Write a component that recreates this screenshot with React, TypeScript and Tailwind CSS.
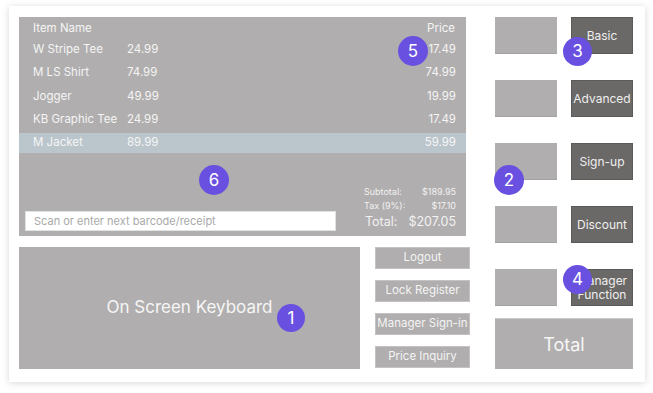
import React from "react";

const items = [
  { name: "W Stripe Tee", price: "24.99", sale: "17.49" },
  { name: "M LS Shirt", price: "74.99", sale: "74.99" },
  { name: "Jogger", price: "49.99", sale: "19.99" },
  { name: "KB Graphic Tee", price: "24.99", sale: "17.49" },
  { name: "M Jacket", price: "89.99", sale: "59.99", active: true },
];

function Badge({ n, className }: { n: string; className: string }) {
  return (
    <div
      className={
        "absolute flex items-center justify-center rounded-full bg-[#6a50e0] text-white text-[17px] leading-none " +
        className
      }
    >
      {n}
    </div>
  );
}

function DarkBtn({ children }: { children: React.ReactNode }) {
  return (
    <div className="w-[62px] h-[37px] bg-[#6b6967] border border-[#5c5a58] flex items-center justify-center text-center text-[12px] leading-[14px] text-[#efefef]">
      {children}
    </div>
  );
}

function Square() {
  return <div className="w-[62px] h-[37px] bg-[#b0aeae] border-b border-[#a3a1a1]" />;
}

function MidBtn({ children }: { children: React.ReactNode }) {
  return (
    <div className="w-[95px] h-[22px] bg-[#b0aeae] border border-[#c4c2c2] flex items-center justify-center whitespace-nowrap text-[11.5px] text-[#f4f4f4]">
      {children}
    </div>
  );
}

export default function App() {
  return (
    <div
      className="w-[653px] h-[393px] bg-white pt-[6px] pl-[9px]"
      style={{ fontFamily: "Inter, 'Noto Sans', sans-serif" }}
    >
      <div className="relative w-[636px] h-[376px] bg-white shadow-[0_1px_7px_rgba(0,0,0,0.16)] pt-[11px] pl-[10px] flex">
        {/* Left column */}
        <div className="w-[447px] shrink-0 flex flex-col">
          {/* Receipt */}
          <div className="h-[219px] bg-[#b0aeae] flex flex-col text-[11.5px] text-[#f5f5f5]">
            <div className="h-[20px] mt-[2px] flex items-center justify-between px-[14px] pr-[11px]">
              <span>Item Name</span>
              <span>Price</span>
            </div>
            <div className="flex flex-col gap-[3.3px] mt-[0.7px]">
              {items.map((it) => (
                <div
                  key={it.name}
                  className={
                    "h-[20px] flex items-center pl-[14px] pr-[10px] " +
                    (it.active ? "bg-[#bbc5cc]" : "")
                  }
                >
                  <span className="w-[94px]">{it.name}</span>
                  <span>{it.price}</span>
                  <span className="ml-auto">{it.sale}</span>
                </div>
              ))}
            </div>
            <div className="flex-1" />
            <div className="flex items-end pl-[6px] pr-[10px] pb-[5px]">
              <div className="w-[311px] h-[20px] bg-white border border-[#e2e2e2] flex items-center pl-[8px] text-[11px] text-[#a9a9a9]">
                Scan or enter next barcode/receipt
              </div>
              <div className="ml-auto w-[92px] flex flex-col text-[#f2f2f2] whitespace-nowrap">
                <div className="flex justify-between text-[9px] leading-[14px]">
                  <span>Subtotal:</span>
                  <span>$189.95</span>
                </div>
                <div className="flex justify-between text-[9px] leading-[14px]">
                  <span>Tax (9%):</span>
                  <span>$17.10</span>
                </div>
                <div className="flex justify-end gap-[11px] text-[12.5px] leading-[18px]">
                  <span>Total:</span>
                  <span>$207.05</span>
                </div>
              </div>
            </div>
          </div>
          {/* Bottom row */}
          <div className="mt-[11px] flex">
            <div className="w-[341px] shrink-0 h-[122px] bg-[#b0aeae] flex items-center justify-center text-[17px] text-[#f6f6f6]">
              On Screen Keyboard
            </div>
            <div className="ml-[15px] shrink-0 flex flex-col gap-[11px]">
              <MidBtn>Logout</MidBtn>
              <MidBtn>Lock Register</MidBtn>
              <MidBtn>Manager Sign-in</MidBtn>
              <MidBtn>Price Inquiry</MidBtn>
            </div>
          </div>
        </div>
        {/* Right column */}
        <div className="ml-[29px] flex flex-col">
          <div className="flex flex-col gap-[26px]">
            <div className="flex gap-[14px]">
              <Square />
              <DarkBtn>Basic</DarkBtn>
            </div>
            <div className="flex gap-[14px]">
              <Square />
              <DarkBtn>Advanced</DarkBtn>
            </div>
            <div className="flex gap-[14px]">
              <Square />
              <DarkBtn>Sign-up</DarkBtn>
            </div>
            <div className="flex gap-[14px]">
              <Square />
              <DarkBtn>Discount</DarkBtn>
            </div>
            <div className="flex gap-[14px]">
              <Square />
              <DarkBtn>
                Manager
                <br />
                Function
              </DarkBtn>
            </div>
          </div>
          <div className="mt-[12px] w-[138px] h-[51px] bg-[#b0aeae] border-t border-[#c9c7c7] flex items-center justify-center text-[18px] text-[#f6f6f6]">
            Total
          </div>
        </div>

        <Badge n="5" className="w-[30px] h-[30px] left-[389px] top-[30px]" />
        <Badge n="6" className="w-[30px] h-[30px] left-[190px] top-[159px]" />
        <Badge n="3" className="w-[29px] h-[29px] left-[554px] top-[31px]" />
        <Badge n="2" className="w-[30px] h-[30px] left-[485px] top-[159px]" />
        <Badge n="4" className="w-[29px] h-[29px] left-[554px] top-[259px]" />
        <Badge n="1" className="w-[28px] h-[28px] left-[268px] top-[298px]" />
      </div>
    </div>
  );
}
